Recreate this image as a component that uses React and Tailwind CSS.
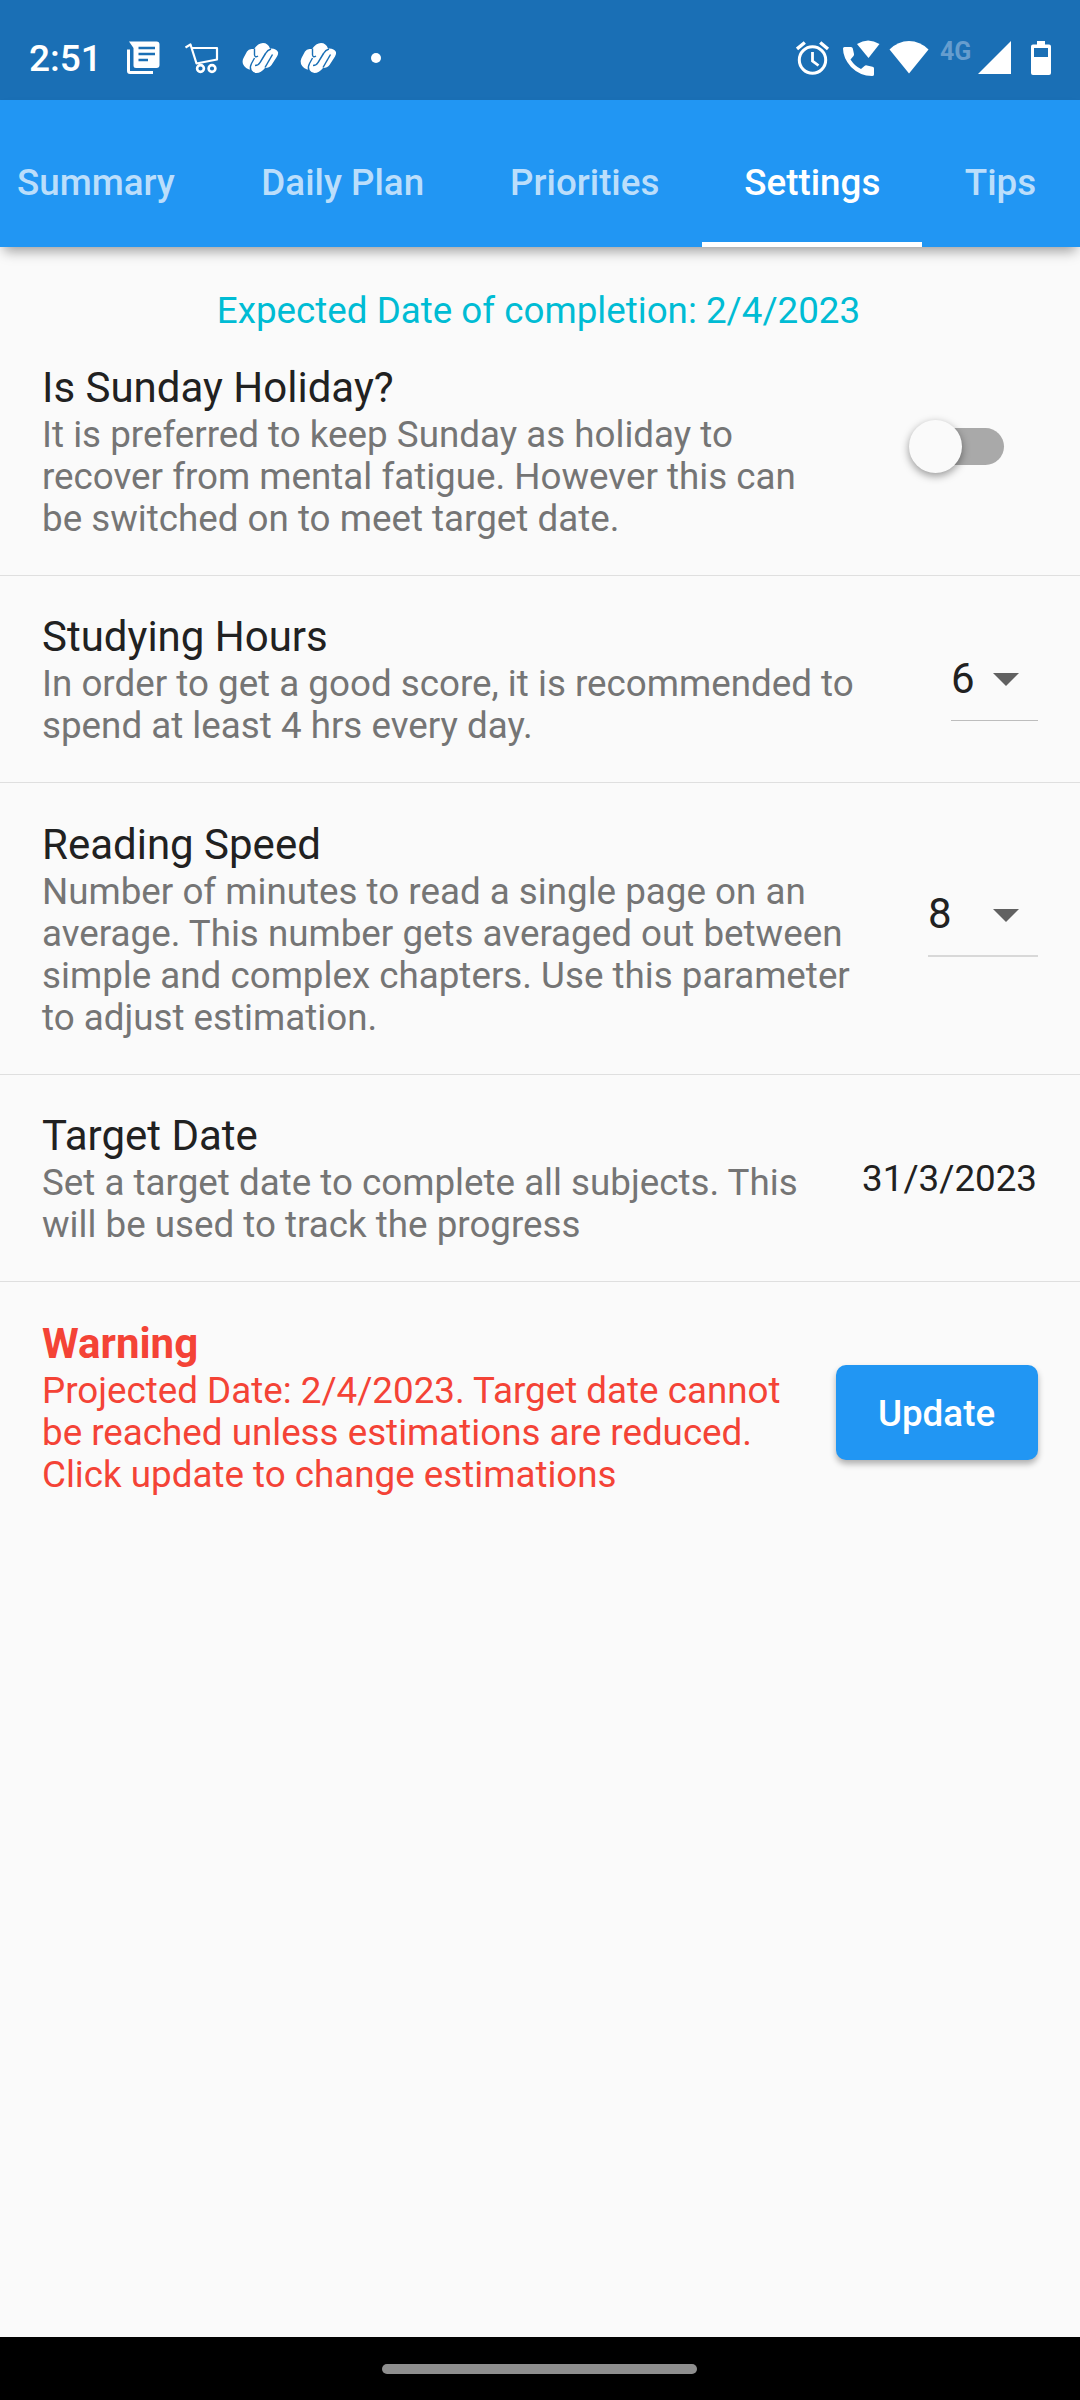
const DocsIcon = () => (
  <svg width="34" height="34" viewBox="0 0 34 34" fill="none">
    <path d="M2 0.5H29.5Q32.5 0.500 32.500 3.500V24Q32.500 27 29.500 27H9Q6.500 27 6.500 24.500V7Z" fill="#fff" />
    <path d="M1.500 8.500V30Q1.500 31.500 3 31.500H26" stroke="#fff" strokeWidth="3" />
    <path d="M11.500 7H28M11.500 13H28M11.500 19H21" stroke="#1a6fb5" strokeWidth="2.600" />
  </svg>
);

const CartIcon = () => (
  <svg width="34" height="34" viewBox="0 0 34 34" fill="none" stroke="#fff" strokeWidth="2.200" strokeLinejoin="round">
    <path d="M0.500 5.500L5.500 2.500L11.500 21.500L32 17.500V6H7" />
    <circle cx="15.500" cy="26.500" r="3.400" strokeWidth="2.600" />
    <circle cx="27" cy="26.500" r="3.400" strokeWidth="2.600" />
  </svg>
);

const SwirlIcon = () => (
  <svg width="37" height="32" viewBox="0 0 37 32" fill="none">
    <path d="M5 9.500Q6.500 7 9.500 7H12Q16 1 21 1Q26 1 28 6.500Q34 6 36 10Q36.500 12 35 14.500L29.500 23Q27.500 26 23 26Q19 31 14.500 31Q11.500 31 9.500 28Q3 27 1 22Q0 19 1.500 16Z" fill="#fff" />
    <path d="M12.500 6.500V13Q13 16 16 14" stroke="#1a6fb5" strokeWidth="1.400" />
    <path d="M9 28.500Q7.500 25 9.500 21.500L12.500 16" stroke="#1a6fb5" strokeWidth="1.400" />
    <path d="M13 23.500Q16.500 23.500 18 20.500L23.500 11.500Q25.500 8 29 7" stroke="#1a6fb5" strokeWidth="1.500" />
    <path d="M23 25.500L30.500 12.500" stroke="#1a6fb5" strokeWidth="1.500" />
  </svg>
);

const AlarmIcon = () => (
  <svg width="34" height="34" viewBox="0 0 34 34" fill="none" stroke="#fff">
    <circle cx="16.500" cy="19" r="13.200" strokeWidth="3" />
    <path d="M16.500 11V20L22.500 24.500" strokeWidth="2.800" />
    <path d="M1 8L8.800 1.500M24.200 1.500L32 8" strokeWidth="3.400" />
  </svg>
);

const WifiCallIcon = () => (
  <svg width="38" height="38" viewBox="0 0 38 38" fill="#fff">
    <path d="M1.500 8H8Q9.500 8 9.800 9.500L11 15Q11.200 16 10.500 17L7.500 20.500Q12 27.500 18 30L21.500 27Q22.500 26 24 26.500L29.500 27.800Q31 28 31 29.500V35.500Q31 37 29 37Q17 37 8 28Q0 19 0 9.500Q0 8 1.500 8Z" />
    <path d="M14 5Q25 -2 36.500 5L25.500 19Z" />
  </svg>
);

const WifiIcon = () => (
  <svg width="40" height="34" viewBox="0 0 40 34" fill="#fff">
    <path d="M0.500 9.500Q9 1 20 1T39.500 9.500L20 33.500Z" />
  </svg>
);

const SignalIcon = () => (
  <svg width="33" height="33" viewBox="0 0 33 33" fill="#fff">
    <path d="M33 0V33H0Z" />
  </svg>
);

const BatteryIcon = () => (
  <svg width="20" height="34" viewBox="0 0 20 34">
    <path fillRule="evenodd" fill="#fff" d="M6 0H14V3.500H18Q20 3.500 20 5.500V32Q20 34 18 34H2Q0 34 0 32V5.500Q0 3.500 2 3.500H6ZM3 7V16H17V7Z" />
  </svg>
);

const StatusBar = () => (
  <div className="flex h-[100px] shrink-0 items-start bg-[#1a6fb5] text-white">
    <div className="ml-[29px] mt-[38px] w-[98px] text-[37px] leading-[42px] font-medium whitespace-nowrap">2:51</div>
    <div className="mt-[41px]"><DocsIcon /></div>
    <div className="ml-[24px] mt-[42px]"><CartIcon /></div>
    <div className="ml-[23px] mt-[42px]"><SwirlIcon /></div>
    <div className="ml-[21px] mt-[42px]"><SwirlIcon /></div>
    <div className="ml-[34px] mt-[53px] size-[10px] rounded-full bg-white" />
    <div className="ml-auto mt-[41px]"><AlarmIcon /></div>
    <div className="ml-[13px] mt-[39px]"><WifiCallIcon /></div>
    <div className="ml-[8px] mt-[40px]"><WifiIcon /></div>
    <div className="ml-[11px] mt-[39px] w-[38px] text-[25px] leading-[25px] font-bold whitespace-nowrap text-[#669dce]">4G</div>
    <div className="mt-[41px]"><SignalIcon /></div>
    <div className="ml-[20px] mr-[29px] mt-[41px]"><BatteryIcon /></div>
  </div>
);

const TABS = [
  { label: "Summary", style: "border-transparent text-[#bbdefb]" },
  { label: "Daily Plan", style: "ml-[2.5px] border-transparent text-[#bbdefb]" },
  { label: "Priorities", style: "ml-[2px] border-transparent text-[#bbdefb]" },
  { label: "Settings", style: "ml-px border-white text-white" },
  { label: "Tips", style: "ml-[0.5px] border-transparent text-[#bbdefb]" },
];

const TabBar = () => (
  <nav className="relative z-10 flex h-[147px] items-end bg-[#2196f3] pt-[21px] shadow-[0_8px_12px_-4px_rgba(0,0,0,0.38)]">
    <div className="ml-[-25px] flex h-[126px]">
      {TABS.map(({ label, style }) => (
        <button
          key={label}
          className={"h-full border-b-[5px] px-[42px] pt-[2px] text-[36.75px] font-medium whitespace-nowrap " + style}
        >
          {label}
        </button>
      ))}
    </div>
  </nav>
);

const Row = ({ title, lines, children, warning, className }) => (
  <section className={"flex items-start justify-between border-[#dfdfdf] px-[42px] " + className}>
    <div className={warning ? "text-[#f44336]" : "text-[#757575]"}>
      <h2
        className={
          warning
            ? "mb-[2px] text-[42px] leading-[49px] font-bold"
            : "mb-[2px] text-[42px] leading-[49px] text-[#212121]"
        }
      >
        {title}
      </h2>
      {lines.map((l) => (
        <p key={l} className="text-[36.75px] leading-[42px] whitespace-nowrap">{l}</p>
      ))}
    </div>
    {children}
  </section>
);

const Arrow = () => (
  <svg width="26" height="13" viewBox="0 0 26 13" fill="#616161">
    <path d="M0 0H26L13 13Z" />
  </svg>
);

export default function App() {
  return (
    <div className="flex h-[2400px] w-[1080px] flex-col overflow-hidden bg-[#fafafa] font-[Roboto,sans-serif]">
      <StatusBar />
      <TabBar />
      <main className="flex-1">
        <p className="mt-[42px] mb-[-5px] pr-[3px] text-center text-[36.75px] leading-[43px] text-[#00bcd4]">
          Expected Date of completion: 2/4/2023
        </p>
        <Row
          className="border-b pt-[36px] pb-[35px]"
          title="Is Sunday Holiday?"
          lines={[
            "It is preferred to keep Sunday as holiday to",
            "recover from mental fatigue. However this can",
            "be switched on to meet target date.",
          ]}
        >
          <div className="mt-[57px] mr-[34px] flex h-[53px] w-[95px] items-center justify-end">
            <div className="flex h-[37px] w-[87px] items-center rounded-full bg-[#a9a9a9]">
              <div className="-ml-[8px] size-[53px] shrink-0 rounded-full bg-[#fafafa] shadow-[0_3px_8px_rgba(0,0,0,0.4)]" />
            </div>
          </div>
        </Row>
        <Row
          className="border-b pt-[36px] pb-[35px]"
          title="Studying Hours"
          lines={["In order to get a good score, it is recommended to", "spend at least 4 hrs every day."]}
        >
          <div className="mt-[26px] flex h-[83px] w-[87px] items-start justify-between border-b border-[#bdbdbd] pr-[19px]">
            <span className="mt-[16px] text-[42px] leading-[49px] text-[#212121]">6</span>
            <span className="mt-[35px]"><Arrow /></span>
          </div>
        </Row>
        <Row
          className="border-b pt-[37px] pb-[35px]"
          title="Reading Speed"
          lines={[
            "Number of minutes to read a single page on an",
            "average. This number gets averaged out between",
            "simple and complex chapters. Use this parameter",
            "to adjust estimation.",
          ]}
        >
          <div className="mt-[54px] flex h-[83px] w-[110px] items-start justify-between border-b-2 border-[#d8d8d8] pr-[19px]">
            <span className="mt-[15px] text-[42px] leading-[49px] text-[#212121]">8</span>
            <span className="mt-[35px]"><Arrow /></span>
          </div>
        </Row>
        <Row
          className="border-b pt-[36px] pb-[35px]"
          title="Target Date"
          lines={["Set a target date to complete all subjects. This", "will be used to track the progress"]}
        >
          <div className="mt-[46px] mr-px text-[36.75px] leading-[43px] text-[#212121]">31/3/2023</div>
        </Row>
        <Row
          className="pt-[37px]"
          title="Warning"
          warning
          lines={[
            "Projected Date: 2/4/2023. Target date cannot",
            "be reached unless estimations are reduced.",
            "Click update to change estimations",
          ]}
        >
          <button className="mt-[46px] h-[95px] w-[202px] rounded-[10px] bg-[#2196f3] pt-[2px] pr-px text-[36.75px] font-medium text-white shadow-[0_4px_6px_rgba(0,0,0,0.3)]">
            Update
          </button>
        </Row>
      </main>
      <footer className="flex h-[63px] justify-center bg-black pt-[27px]">
        <div className="mr-px h-[10px] w-[315px] rounded-full bg-[#8e8e8e]" />
      </footer>
    </div>
  );
}
